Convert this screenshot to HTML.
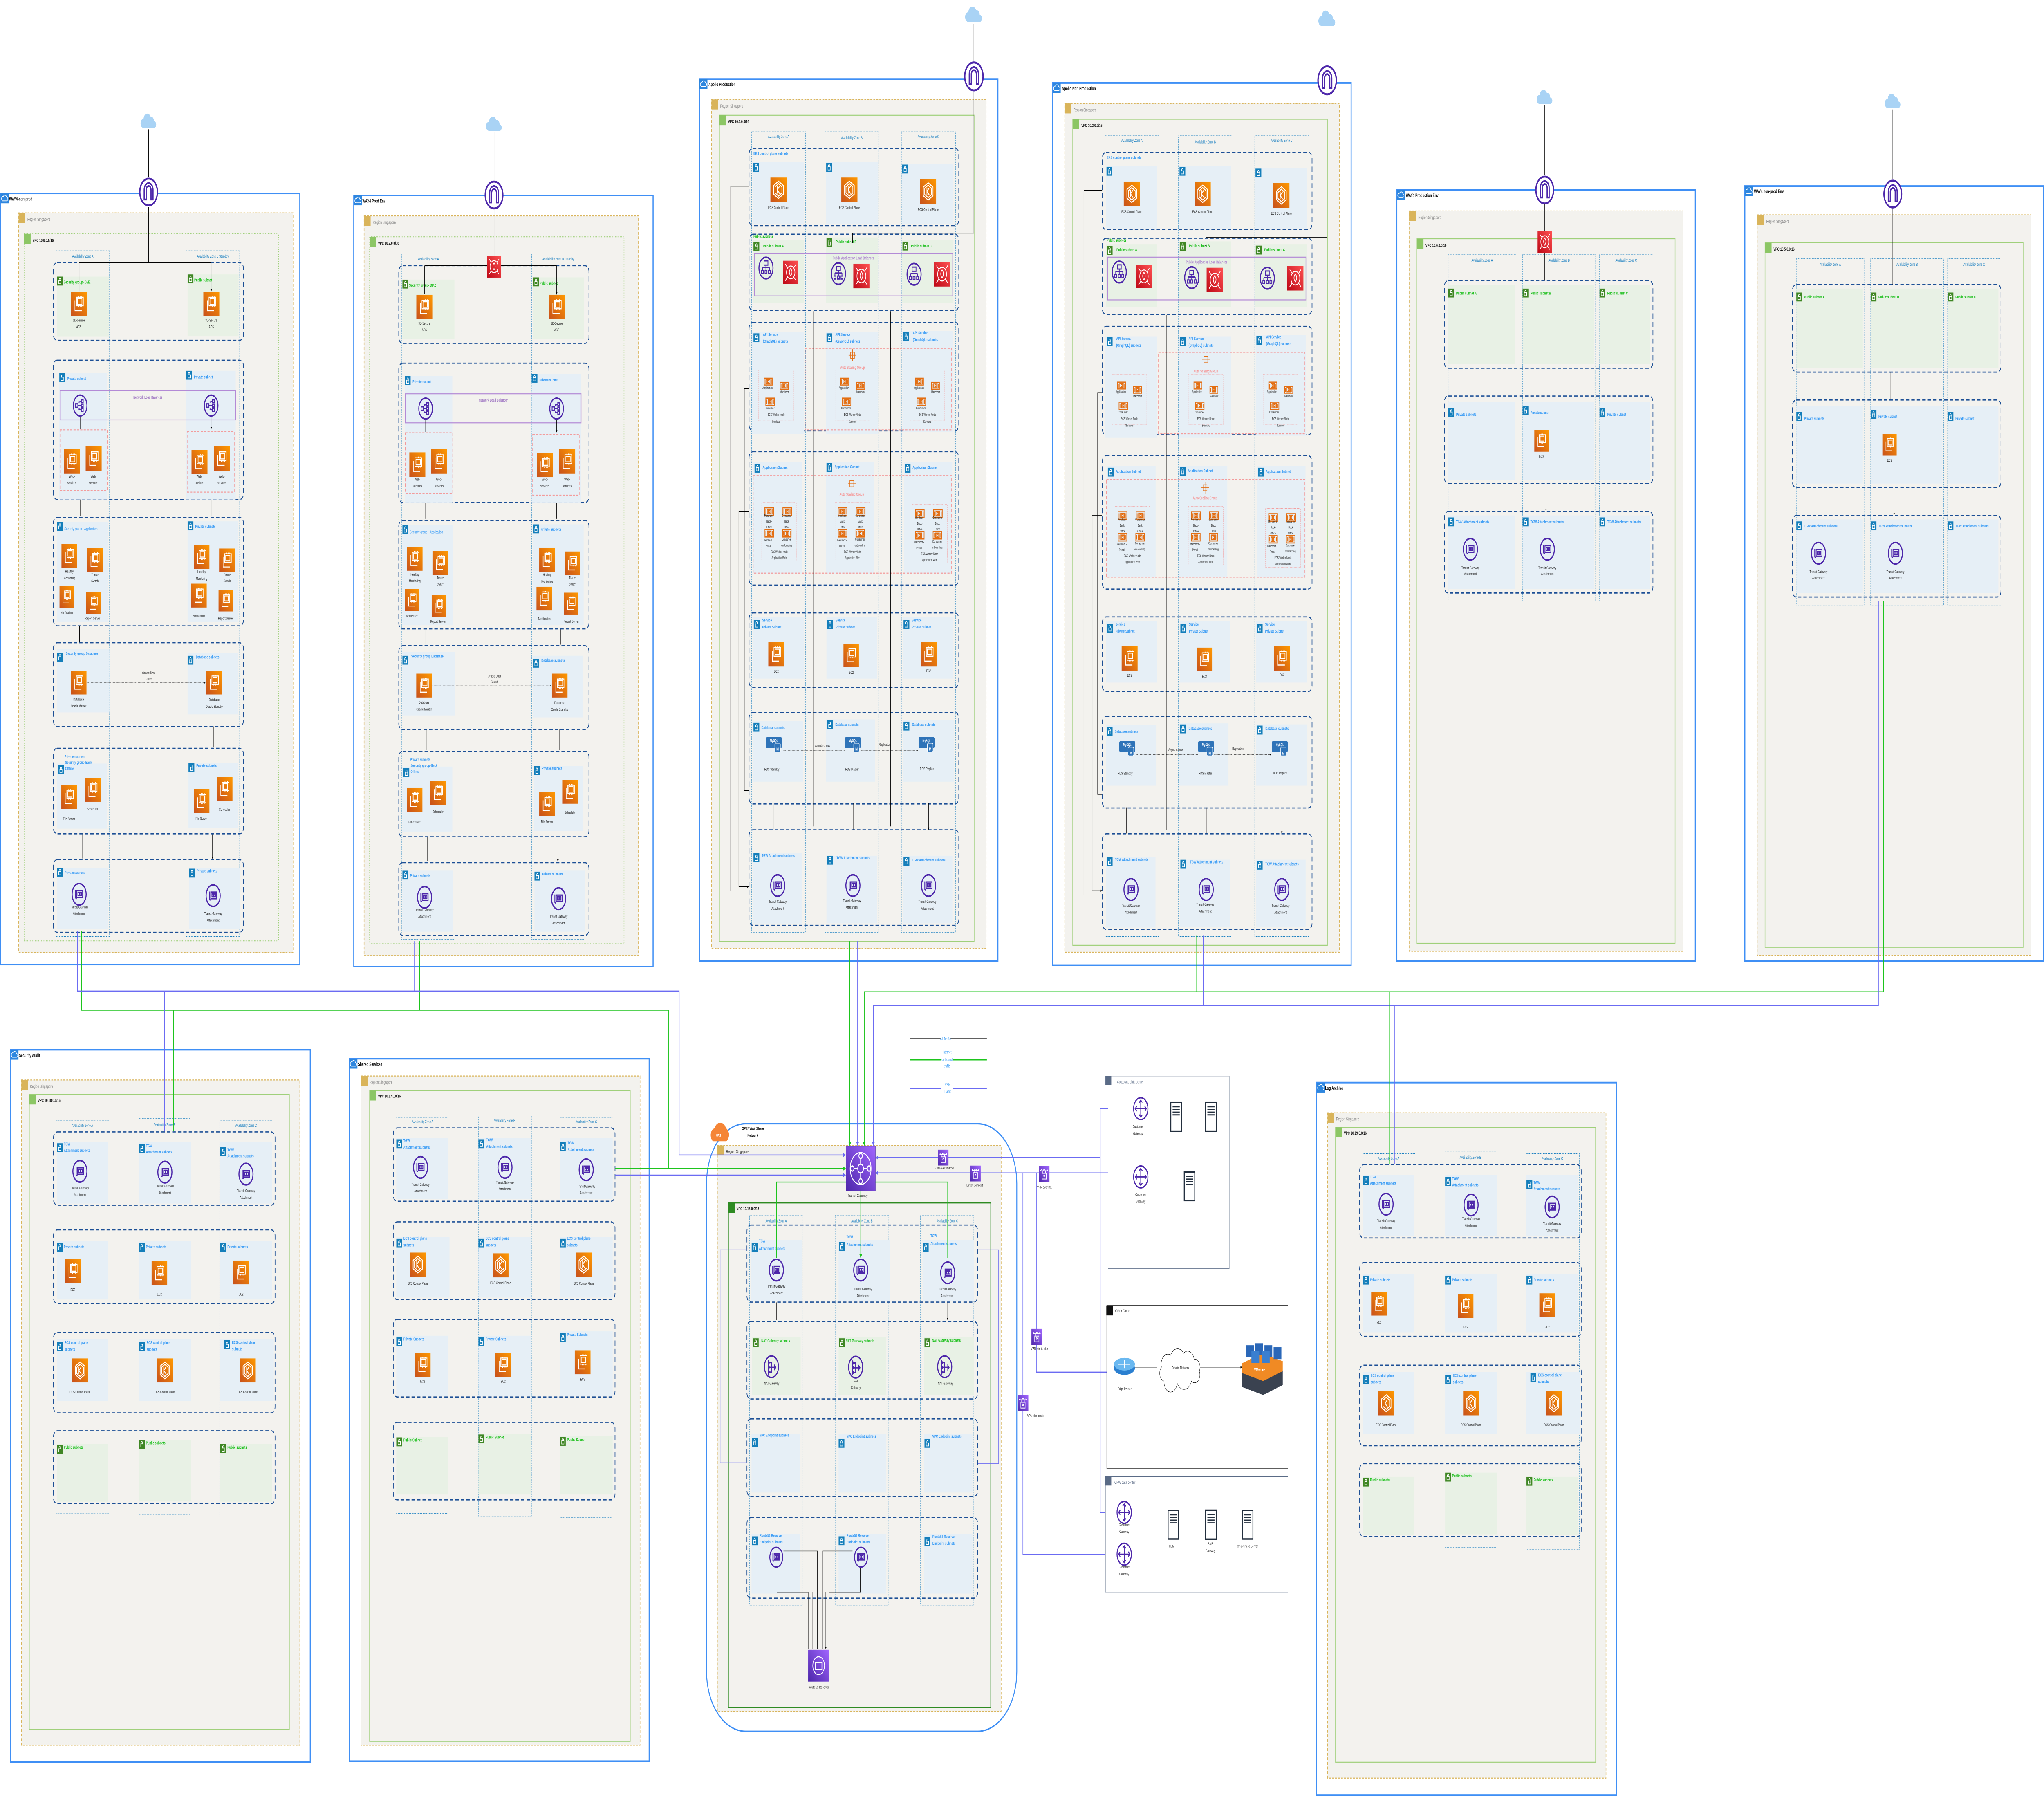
<!DOCTYPE html>
<html><head><meta charset="utf-8"><title>AWS Architecture</title>
<meta name="viewport" content="width=device-width,initial-scale=1">
<style>
html,body{margin:0;padding:0;background:#fff;width:100vw;height:100vh;overflow:hidden}
#main{display:block;position:absolute;left:0;top:0;width:100vw;height:100vh}
text{font-family:"Liberation Sans",Arial,sans-serif}
.acc{fill:#fff;stroke:#3f8ff5;stroke-width:.8}
.reg{fill:#f3f2ee;stroke:#d9b45a;stroke-width:.45;stroke-dasharray:1.4 .9}
.vpc{fill:none;stroke:#9fd07a;stroke-width:.45;stroke-dasharray:.5 .7}
.az{fill:none;stroke:#1a7fc0;stroke-width:.2;stroke-dasharray:.7 .5}
.g{fill:none;stroke:#1c4f95;stroke-width:.55;stroke-dasharray:2.6 1.6}
.sb{fill:#e6eff6}.sg{fill:#e8f1e5}
.pk{fill:none;stroke:#f39b9b;stroke-width:.45;stroke-dasharray:1.6 1}
.pd{fill:none;stroke:#f3a0a0;stroke-width:.2;stroke-dasharray:.6 .4}
.h{font-size:2.4px;font-weight:bold;fill:#111}
.rl{font-size:2.2px;fill:#8a8a8a}
.vl{font-size:2.2px;font-weight:bold;fill:#111}
.al{font-size:2px;fill:#1a7fc0;text-anchor:middle}
.lb{font-size:2.1px;font-weight:bold;fill:#3a9cf5}
.lg{font-size:2.1px;font-weight:bold;fill:#20c020}
.il{font-size:1.9px;fill:#222;text-anchor:middle}
.sm{font-size:1.6px;fill:#222;text-anchor:middle}
.k{stroke:#000;stroke-width:.3;fill:none}
.gr{stroke:#1dc41d;stroke-width:.5;fill:none}
.pu{stroke:#6b6bf2;stroke-width:.5;fill:none}
.pt{stroke:#6b6bf2;stroke-width:.25;fill:none}
</style></head>
<body>
<svg id="main" xmlns="http://www.w3.org/2000/svg" xmlns:xlink="http://www.w3.org/1999/xlink" width="100%" height="100%" viewBox="0 0 1568 903" preserveAspectRatio="none">
<defs>
<marker id="ar" viewBox="0 0 6 6" refX="5" refY="3" markerWidth="4" markerHeight="4" orient="auto"><path d="M0 0L6 3L0 6z" fill="#000"/></marker>
<marker id="ap" viewBox="0 0 6 6" refX="5" refY="3" markerWidth="4" markerHeight="4" orient="auto"><path d="M0 0L6 3L0 6z" fill="#6b6bf2"/></marker>
<marker id="ag" viewBox="0 0 6 6" refX="5" refY="3" markerWidth="4" markerHeight="4" orient="auto"><path d="M0 0L6 3L0 6z" fill="#1dc41d"/></marker>
<linearGradient id="og" x1="0" y1="1" x2="1" y2="0"><stop offset="0" stop-color="#c8511b"/><stop offset="1" stop-color="#ff9900"/></linearGradient>
<linearGradient id="pg" x1="0" y1="1" x2="1" y2="0"><stop offset="0" stop-color="#4d27aa"/><stop offset="1" stop-color="#a166ff"/></linearGradient>
<linearGradient id="rg" x1="0" y1="1" x2="1" y2="0"><stop offset="0" stop-color="#bd0816"/><stop offset="1" stop-color="#ff5252"/></linearGradient>
<symbol id="ec2" viewBox="0 0 40 40"><rect width="40" height="40" fill="url(#og)"/><g fill="none" stroke="#fff" stroke-width="1.6"><rect x="14" y="9" width="17" height="14"/><path d="M10 14v17h17"/><rect x="16.5" y="11.5" width="11" height="9"/><path d="M19 9V7M23 9V7M27 9V7M19 23v2M23 23v2M27 23v2"/></g></symbol>
<symbol id="eks" viewBox="0 0 40 40"><rect width="40" height="40" fill="url(#og)"/><g fill="none" stroke="#fff" stroke-width="1.8"><path d="M20 6l12 7v14l-12 7-12-7V13z"/><path d="M20 10l8.5 5v10L20 30l-8.5-5V15z"/><path d="M17 14v12M17 20l6-6M17 20l6 6"/></g></symbol>
<symbol id="tga" viewBox="0 0 40 40"><circle cx="20" cy="20" r="18" fill="none" stroke="#4d27aa" stroke-width="2.6"/><g fill="none" stroke="#4d27aa" stroke-width="2.2"><rect x="14" y="14" width="15" height="11"/><rect x="17" y="17" width="4" height="5"/><rect x="22" y="17" width="4" height="5"/><path d="M10.5 13v14M11 27h3"/></g></symbol>
<symbol id="elb" viewBox="0 0 40 40"><circle cx="20" cy="20" r="18" fill="none" stroke="#4d27aa" stroke-width="2.6"/><g fill="none" stroke="#4d27aa" stroke-width="2.2"><rect x="8" y="17" width="6" height="6"/><path d="M14 20h8M16 14l6-1M16 26l6 1"/><rect x="23" y="10" width="5" height="5"/><rect x="23" y="17.5" width="5" height="5"/><rect x="23" y="25" width="5" height="5"/></g></symbol>
<symbol id="alb" viewBox="0 0 40 40"><circle cx="20" cy="20" r="18" fill="none" stroke="#4d27aa" stroke-width="2.6"/><g fill="none" stroke="#4d27aa" stroke-width="2"><rect x="15" y="8" width="10" height="7"/><path d="M20 15v4M11 19h18M11 19v5M20 19v5M29 19v5"/><rect x="8.5" y="24" width="5" height="5"/><rect x="17.5" y="24" width="5" height="5"/><rect x="26.5" y="24" width="5" height="5"/></g></symbol>
<symbol id="nat" viewBox="0 0 40 40"><circle cx="20" cy="20" r="18" fill="none" stroke="#4d27aa" stroke-width="2.6"/><g fill="none" stroke="#4d27aa" stroke-width="2.2"><path d="M12 10l3 3-3 3zM12 18l3 3-3 3zM12 26l3 3-3 3z"/><path d="M15 13h5v16h-5M15 21h13M28 18l3 3-3 3z"/></g></symbol>
<symbol id="waf" viewBox="0 0 40 40"><rect width="40" height="40" fill="url(#rg)"/><g fill="none" stroke="#fff" stroke-width="1.6"><circle cx="20" cy="20" r="11"/><path d="M20 13c-5 5-4 9 0 13 4-4 5-8 0-13zM6 6l6 6M34 6l-6 6M6 34l6-6M34 34l-6-6"/></g></symbol>
<symbol id="ecs" viewBox="0 0 20 12"><g fill="none" stroke="#e36e12" stroke-width="1.5"><rect x="1" y="1" width="18" height="10"/><rect x="6" y="3" width="8" height="6"/><path d="M3 3v6M17 3v6M8.5 4.5h3v3h-3z"/></g></symbol>
<symbol id="db" viewBox="0 0 40 26"><rect width="40" height="18" rx="3" fill="#2e73b8"/><text x="20" y="8" font-size="6" font-weight="bold" fill="#fff" text-anchor="middle">MySQL</text><rect x="22" y="10" width="14" height="14" rx="2" fill="#2e73b8" stroke="#fff" stroke-width="1"/><text x="29" y="22" font-size="7" font-weight="bold" fill="#fff" text-anchor="middle">M</text></symbol>
<symbol id="cg" viewBox="0 0 40 40"><circle cx="20" cy="20" r="18" fill="#fff" stroke="#4d27aa" stroke-width="2.4"/><g fill="none" stroke="#4d27aa" stroke-width="2"><path d="M20 6v28M6 20h28M16 10l4-4 4 4M16 30l4 4 4-4M10 16l-4 4 4 4M30 16l4 4-4 4"/></g></symbol>
<symbol id="srv" viewBox="0 0 20 34"><rect x="1" y="1" width="18" height="32" fill="#fff" stroke="#232f3e" stroke-width="1.6"/><path d="M4 6h12M4 9h12M4 12h12M4 15h12" stroke="#232f3e" stroke-width="1.3"/></symbol>
<symbol id="vpn" viewBox="0 0 20 20"><rect width="20" height="20" fill="url(#pg)"/><g fill="none" stroke="#fff" stroke-width="1"><rect x="6" y="9" width="8" height="7"/><path d="M7.5 9V7a2.5 2.5 0 0 1 5 0v2M3 6h14M3 6l2-2M17 6l-2-2"/><circle cx="10" cy="12" r="1"/></g></symbol>
<symbol id="lkb" viewBox="0 0 10 10"><rect width="10" height="10" fill="#147eba"/><g fill="none" stroke="#fff" stroke-width=".8"><rect x="3" y="4.5" width="4" height="3.5"/><path d="M3.8 4.5V3.2a1.2 1.2 0 0 1 2.4 0v1.3"/></g></symbol>
<symbol id="lkg" viewBox="0 0 10 10"><rect width="10" height="10" fill="#3f8624"/><g fill="none" stroke="#fff" stroke-width=".8"><rect x="3" y="4.5" width="4" height="3.5"/><path d="M3.8 4.5V3.2a1.2 1.2 0 0 1 2.4 0v1.3"/></g></symbol>
<symbol id="igw" viewBox="0 0 40 40"><circle cx="20" cy="20" r="18" fill="#fff" stroke="#4d27aa" stroke-width="2.6"/><g fill="none" stroke="#4d27aa" stroke-width="2.4"><path d="M11 30V17a9 9 0 0 1 18 0v13h-4V17a5 5 0 0 0-10 0v13z"/></g></symbol>
<symbol id="cld" viewBox="0 0 40 24"><path d="M8 22a7 7 0 0 1 0-14 9 9 0 0 1 17-3 7 7 0 0 1 8 7 5 5 0 0 1 0 10z" fill="#a9d3f5"/></symbol>
<symbol id="acci" viewBox="0 0 10 8"><rect width="10" height="8" fill="#2e86de"/><path d="M2.5 6h5a1.5 1.5 0 0 0 0-3 2.2 2.2 0 0 0-4-.5A1.7 1.7 0 0 0 2.5 6z" fill="none" stroke="#fff" stroke-width=".6"/></symbol>

<g id="metro">
<rect class="reg" x="14.3" y="107" width="210.5" height="371.7"/>
<rect x="14.3" y="107" width="5" height="5" fill="#d9b45a"/>
<text class="rl" x="21" y="111">Region Singapore</text>
<rect class="vpc" x="18.5" y="117.5" width="195.2" height="355.3"/>
<rect x="18.5" y="117.5" width="5" height="5" fill="#8cc665"/>
<rect class="az" x="43" y="126" width="41" height="344.6"/>
<rect class="az" x="142.8" y="126" width="41" height="344.6"/>
<text class="al" x="63.5" y="129.4">Availability Zone A</text>
<text class="al" x="163.3" y="129.4">Availability Zone B Standby</text>
<rect class="g" x="40.9" y="132" width="145.9" height="39" rx="3"/>
<rect class="sg" x="43.7" y="139" width="39.9" height="30"/><use href="#lkg" x="43.7" y="139" width="4.5" height="4.5"/><text class="lg" x="48.8" y="142.5">Security group- DMZ</text>
<rect class="sg" x="143.9" y="137.9" width="39.1" height="31"/><use href="#lkg" x="143.9" y="137.9" width="4.5" height="4.5"/><text class="lg" x="149" y="141.5">Public subnet</text>
<use href="#ec2" x="54.4" y="146.6" width="12.3" height="12.3"/><text class="il" x="60.5" y="161.6">3D-Secure</text><text class="il" x="60.5" y="164.9">ACS</text>
<use href="#ec2" x="156" y="146.6" width="12.3" height="12.3"/><text class="il" x="162.1" y="161.6">3D-Secure</text><text class="il" x="162.1" y="164.9">ACS</text>
<rect class="g" x="40.9" y="181" width="145.9" height="70" rx="3"/>
<rect class="sb" x="45.5" y="187.5" width="36.5" height="63.5"/><use href="#lkb" x="45.5" y="187.5" width="4.5" height="4.5"/><text class="lb" x="51.5" y="191">Private subnet</text>
<rect class="sb" x="142.8" y="186.3" width="38" height="64.7"/><use href="#lkb" x="142.8" y="186.3" width="4.5" height="4.5"/><text class="lb" x="148.8" y="190.2">Private subnet</text>
<rect x="46" y="196.4" width="134.8" height="14.6" fill="none" stroke="#b38ad6" stroke-width=".45"/>
<text x="113.4" y="200.3" font-size="2px" font-weight="bold" fill="#a37cc4" text-anchor="middle">Network Load Balancer</text>
<use href="#elb" x="55.7" y="198" width="11.6" height="11.6"/><use href="#elb" x="156.2" y="198" width="11.6" height="11.6"/>
<path class="k" d="M61.5 209.6V215.6M162 209.6V215.6" marker-end="url(#ar)"/>
<rect class="pk" x="46" y="216" width="36.3" height="30.5"/><rect class="pk" x="143.6" y="216.8" width="36.1" height="30.5"/>
<use href="#ec2" x="49" y="225.8" width="12.3" height="12.3"/><use href="#ec2" x="65.7" y="224.3" width="12.3" height="12.3"/>
<use href="#ec2" x="146.9" y="226" width="12.3" height="12.3"/><use href="#ec2" x="164" y="224.3" width="12.3" height="12.3"/>
<text class="il" x="55.2" y="240">Web-</text><text class="il" x="55.2" y="243.3">services</text>
<text class="il" x="71.8" y="240">Web-</text><text class="il" x="71.8" y="243.3">services</text>
<text class="il" x="153" y="240">Web-</text><text class="il" x="153" y="243.3">services</text>
<text class="il" x="170.1" y="240">Web-</text><text class="il" x="170.1" y="243.3">services</text>
<path class="k" d="M61.5 251V259.2M162 251V259.2M61 314.5V322.4M165 314.5V322.4M62 365V375.4M164 365V375.4M63 419V431.4M163 419V431.4" marker-end="url(#ar)"/>
<rect class="g" x="40.9" y="260" width="145.9" height="54.5" rx="3"/>
<rect class="sb" x="43.7" y="262.3" width="38.9" height="50.4"/><use href="#lkb" x="43.7" y="262.3" width="4.5" height="4.5"/><text x="49.3" y="266.5" font-size="2.1px" fill="#3a9cf5">Security group - Application</text>
<rect class="sb" x="143.9" y="262" width="38.8" height="50.7"/><use href="#lkb" x="143.9" y="262" width="4.5" height="4.5"/><text class="lb" x="149.8" y="265.2">Private subnets</text>
<use href="#ec2" x="47" y="273.3" width="12.3" height="12"/><use href="#ec2" x="66.6" y="275.4" width="12.3" height="12"/>
<use href="#ec2" x="45" y="294.5" width="12.3" height="11"/><use href="#ec2" x="65.5" y="297.6" width="12.3" height="11"/>
<text class="il" x="53.2" y="287.8">Healthy</text><text class="il" x="53.2" y="291.1">Monitoring</text>
<text class="il" x="72.8" y="289.3">Trans-</text><text class="il" x="72.8" y="292.6">Switch</text>
<text class="il" x="51.2" y="308.6">Notification</text><text class="il" x="71" y="311.4">Report Server</text>
<use href="#ec2" x="148.5" y="273.8" width="12.3" height="12"/><use href="#ec2" x="168" y="275.6" width="12.3" height="12"/>
<use href="#ec2" x="146.4" y="293.3" width="12.3" height="12"/><use href="#ec2" x="167" y="296.3" width="12.3" height="11"/>
<text class="il" x="154.7" y="288">Healthy</text><text class="il" x="154.7" y="291.3">Monitoring</text>
<text class="il" x="174.2" y="289.3">Trans-</text><text class="il" x="174.2" y="292.6">Switch</text>
<text class="il" x="152.6" y="310.1">Notification</text><text class="il" x="173.2" y="311.4">Report Server</text>
<rect class="g" x="40.9" y="323" width="145.9" height="42" rx="3"/>
<rect class="sb" x="43.7" y="326.2" width="40.3" height="31.8"/><use href="#lkb" x="43.7" y="328" width="4.5" height="4.5"/><text class="lb" x="50.5" y="329">Security group Database</text>
<rect class="sb" x="143.9" y="328" width="38.5" height="31"/><use href="#lkb" x="143.9" y="329.5" width="4.5" height="4.5"/><text class="lb" x="150.3" y="330.9">Database subnets</text>
<use href="#ec2" x="54.2" y="337" width="12.3" height="12"/><use href="#ec2" x="158.2" y="337" width="12.3" height="12"/>
<text class="il" x="60.3" y="352.1">Database</text><text class="il" x="60.3" y="355.5">Oracle Master</text>
<text class="il" x="164.3" y="352.3">Database</text><text class="il" x="164.3" y="355.7">Oracle Standby</text>
<path d="M66.7 343.1H157.5" stroke="#444" stroke-width=".2" stroke-dasharray=".6 .4" fill="none" marker-end="url(#ar)"/>
<text class="il" x="114.2" y="338.8">Oracle Data</text><text class="il" x="114.2" y="341.8">Guard</text>
<rect class="g" x="40.9" y="376" width="145.9" height="43" rx="3"/>
<rect class="sb" x="43.7" y="383.7" width="38.3" height="32.7"/><use href="#lkb" x="44.5" y="384.5" width="4.5" height="4.5"/>
<text class="lb" x="49.6" y="380.9">Private subnets</text><text class="lb" x="50" y="383.8">Security group-Back</text><text class="lb" x="50" y="386.9">Offfice</text>
<rect class="sb" x="144.6" y="383.5" width="37.7" height="32.5"/><use href="#lkb" x="144.6" y="383.5" width="4.5" height="4.5"/><text class="lb" x="150.6" y="385.3">Private subnets</text>
<use href="#ec2" x="46.9" y="394.4" width="12.3" height="12"/><use href="#ec2" x="65" y="390.9" width="12.3" height="12"/>
<use href="#ec2" x="148.5" y="396.5" width="12.3" height="12"/><use href="#ec2" x="166.2" y="390.4" width="12.3" height="12"/>
<text class="il" x="53" y="412.2">File-Server</text><text class="il" x="71" y="407.1">Scheduler</text>
<text class="il" x="154.6" y="412">File Server</text><text class="il" x="172.3" y="407.4">Scheduler</text>
<rect class="g" x="40.9" y="432" width="145.9" height="36.5" rx="3"/>
<rect class="sb" x="43.7" y="436" width="38.9" height="30.7"/><use href="#lkb" x="43.7" y="436" width="4.5" height="4.5"/><text class="lb" x="49.6" y="439.2">Private subnets</text>
<rect class="sb" x="145" y="436" width="38.8" height="30.7"/><use href="#lkb" x="145" y="436.5" width="4.5" height="4.5"/><text class="lb" x="151" y="438.4">Private subnets</text>
<use href="#tga" x="54.7" y="443.4" width="12" height="12"/><use href="#tga" x="157.5" y="444.1" width="12" height="12"/>
<text class="il" x="60.7" y="456.4">Transit Gateway</text><text class="il" x="60.7" y="459.7">Attachment</text>
<text class="il" x="163.5" y="459.7">Transit Gateway</text><text class="il" x="163.5" y="463">Attachment</text>
<use href="#cld" x="107.5" y="57" width="13" height="8"/>
<path class="k" d="M114 65V89"/>
<path class="k" d="M114 104V132M60.7 132H162"/>
<path class="k" d="M60.7 132V146.4M162 132V146.4" marker-end="url(#ar)"/>
<use href="#igw" x="106.5" y="89" width="15" height="15"/>
</g>

<g id="apollo">
<rect class="reg" x="545.8" y="50" width="210.7" height="426.5"/>
<rect x="545.8" y="50" width="5" height="5" fill="#d9b45a"/>
<text class="rl" x="552.5" y="54">Region Singapore</text>
<rect x="551.9" y="57.9" width="195.4" height="415.1" fill="none" stroke="#9fd07a" stroke-width=".45"/>
<rect x="551.9" y="57.9" width="5" height="5" fill="#8cc665"/>
<rect class="az" x="576.6" y="66.2" width="41.4" height="402.4"/>
<rect class="az" x="633" y="66.2" width="41" height="402.4"/>
<rect class="az" x="691.5" y="66.2" width="41.5" height="402.4"/>
<text class="al" x="597.3" y="69.3">Availability Zone A</text><text class="al" x="653.5" y="70">Availability Zone B</text><text class="al" x="712.2" y="69.3">Availability Zone C</text>
<rect class="g" x="574.6" y="74.5" width="160.9" height="38.9" rx="3"/>
<text class="lb" x="578" y="77.8">EKS control plane subnets</text>
<rect class="sb" x="577.5" y="81.5" width="39.2" height="31.3"/><use href="#lkb" x="577.8" y="81.8" width="4.5" height="4.5"/>
<rect class="sb" x="633.5" y="81.5" width="40" height="31.3"/><use href="#lkb" x="633.8" y="81.8" width="4.5" height="4.5"/>
<rect class="sb" x="691.8" y="82.4" width="39.6" height="30.4"/><use href="#lkb" x="692.1" y="82.7" width="4.5" height="4.5"/>
<use href="#eks" x="591" y="89.2" width="12.4" height="12.4"/><use href="#eks" x="645.4" y="89.2" width="12.4" height="12.4"/><use href="#eks" x="705.8" y="90" width="12.4" height="12.4"/>
<text class="il" x="597.2" y="105">ECS Control Plane</text><text class="il" x="651.6" y="105">ECS Control Plane</text><text class="il" x="712" y="105.9">ECS Control Plane</text>
<rect class="g" x="574.6" y="117.7" width="160.9" height="38.3" rx="3"/>
<rect class="sg" x="577.5" y="120.7" width="39.2" height="31.6"/><use href="#lkg" x="578" y="121.6" width="4.5" height="4.5"/>
<rect class="sg" x="633.5" y="119.3" width="40" height="33"/><use href="#lkg" x="634" y="119.6" width="4.5" height="4.5"/>
<rect class="sg" x="691.8" y="120.7" width="39.6" height="31.6"/><use href="#lkg" x="692.3" y="121.4" width="4.5" height="4.5"/>
<text class="lg" x="578" y="119.4">Public subnets</text>
<text class="lg" x="585.5" y="124.3">Public subnet A</text><text class="lg" x="641.2" y="122.2">Public subnet B</text><text class="lg" x="698.9" y="124.3">Public subnet C</text>
<rect x="578.7" y="127.2" width="152.1" height="21.5" fill="none" stroke="#b38ad6" stroke-width=".45"/>
<text x="654.6" y="130.4" font-size="2px" font-weight="bold" fill="#b08ad0" text-anchor="middle">Public Application Load Balancer</text>
<use href="#alb" x="581.6" y="128.7" width="12" height="12"/><use href="#alb" x="637.2" y="131.5" width="12" height="12"/><use href="#alb" x="695.2" y="131.8" width="12" height="12"/>
<use href="#waf" x="600.4" y="131" width="12.3" height="11.8"/><use href="#waf" x="654.6" y="132.5" width="12.4" height="12.4"/><use href="#waf" x="716.5" y="131.6" width="12.4" height="12.4"/>
<rect class="g" x="574.6" y="162" width="160.9" height="54.5" rx="3"/>
<rect class="sb" x="577" y="167" width="39.6" height="51"/><use href="#lkb" x="578" y="167.5" width="4.5" height="4.5"/>
<rect class="sb" x="633.5" y="167" width="40" height="51"/><use href="#lkb" x="634" y="167.5" width="4.5" height="4.5"/>
<rect class="sb" x="692.3" y="166.4" width="38.4" height="50.6"/><use href="#lkb" x="692.8" y="166.8" width="4.5" height="4.5"/>
<text class="lb" x="585.3" y="168.8">API Service</text><text class="lb" x="585.3" y="172.2">(GraphQL) subnets</text>
<text class="lb" x="640.8" y="168.8">API Service</text><text class="lb" x="640.8" y="172.2">(GraphQL) subnets</text>
<text class="lb" x="700.3" y="168">API Service</text><text class="lb" x="700.3" y="171.4">(GraphQL) subnets</text>
<rect class="pk" x="617.7" y="175" width="112.3" height="41"/>
<path d="M651 178.5h6M654 175.5v6" stroke="#e36e12" stroke-width=".35"/><rect x="652.5" y="177" width="3" height="3" fill="none" stroke="#e36e12" stroke-width=".35"/>
<text x="654" y="185.3" font-size="2px" font-weight="bold" fill="#f59a9a" text-anchor="middle">Auto Scaling Group</text>
<g id="apis">
<rect class="pd" x="582" y="186" width="26.7" height="25.5"/>
<use href="#ecs" x="585.5" y="189.7" width="7.7" height="4.1"/><use href="#ecs" x="597.7" y="191.8" width="7.8" height="4.1"/><use href="#ecs" x="586.8" y="199.7" width="7.9" height="4.4"/>
<text class="sm" x="588.8" y="195.5">Application</text><text class="sm" x="601.7" y="197.6">Merchant</text><text class="sm" x="590.4" y="205.7">Consumer</text>
<text class="sm" x="595.4" y="209">ECS Worker Node</text><text class="sm" x="595.4" y="212.4">Services</text>
</g>
<use href="#apis" transform="translate(58.6,0)"/><use href="#apis" transform="translate(116,0)"/>
<rect class="g" x="574.6" y="227" width="160.9" height="67" rx="3"/>
<rect class="sb" x="577.8" y="232.1" width="37.7" height="56.1"/><use href="#lkb" x="578.8" y="233" width="4.5" height="4.5"/>
<rect class="sb" x="633.5" y="232.1" width="37" height="56.1"/><use href="#lkb" x="634" y="232.6" width="4.5" height="4.5"/>
<rect class="sb" x="693.5" y="232.1" width="37" height="56.1"/><use href="#lkb" x="694" y="233" width="4.5" height="4.5"/>
<text class="lb" x="585" y="235.6">Application Subnet</text><text class="lb" x="640.2" y="235.3">Application Subnet</text><text class="lb" x="700" y="235.6">Application Subnet</text>
<rect class="pk" x="577.8" y="239" width="152.2" height="49"/>
<path d="M650.4 243.1h6M653.4 240.1v6" stroke="#e36e12" stroke-width=".35"/><rect x="651.9" y="241.6" width="3" height="3" fill="none" stroke="#e36e12" stroke-width=".35"/>
<text x="653.4" y="249" font-size="2px" font-weight="bold" fill="#f59a9a" text-anchor="middle">Auto Scaling Group</text>
<g id="apw">
<rect class="pd" x="584.3" y="252.5" width="26.9" height="29.5"/>
<use href="#ecs" x="585.8" y="254.8" width="8.6" height="4.5"/><use href="#ecs" x="600" y="254.8" width="7.9" height="4.5"/>
<use href="#ecs" x="586.2" y="265.8" width="7.8" height="4.4"/><use href="#ecs" x="599.6" y="265.8" width="8" height="4.4"/>
<text class="sm" x="590.1" y="259.7">Merchant -</text><text class="sm" x="590.1" y="262.6">Back-</text><text class="sm" x="590.1" y="265.5">Office</text>
<text class="sm" x="603.6" y="259.7">Consumer</text><text class="sm" x="603.6" y="262.6">Back</text><text class="sm" x="603.6" y="265.5">Office</text>
<text class="sm" x="589.5" y="272">Merchant -</text><text class="sm" x="589.5" y="274.9">Portal</text>
<text class="sm" x="603.4" y="271.6">Consumer</text><text class="sm" x="603.4" y="274.6">onBoarding</text>
<text class="sm" x="597.7" y="277.9">ECS Worker Node</text><text class="sm" x="597.7" y="280.9">Application Web</text>
</g>
<use href="#apw" transform="translate(56.3,0)"/><use href="#apw" transform="translate(115.5,1)"/>
<rect class="g" x="574.6" y="308" width="160.9" height="37.5" rx="3"/>
<rect class="sb" x="577.5" y="310" width="39.2" height="31"/><use href="#lkb" x="578.2" y="311.5" width="4.5" height="4.5"/>
<rect class="sb" x="634" y="310" width="38.7" height="31"/><use href="#lkb" x="634.5" y="311.5" width="4.5" height="4.5"/>
<rect class="sb" x="692.6" y="310" width="38.8" height="31"/><use href="#lkb" x="693.1" y="311.5" width="4.5" height="4.5"/>
<text class="lb" x="584.7" y="312.4">Service</text><text class="lb" x="584.7" y="315.8">Private Subnet</text>
<text class="lb" x="641.1" y="312.4">Service</text><text class="lb" x="641.1" y="315.8">Private Subnet</text>
<text class="lb" x="699.5" y="312.4">Service</text><text class="lb" x="699.5" y="315.8">Private Subnet</text>
<use href="#ec2" x="589.4" y="322.6" width="12.3" height="12.4"/><use href="#ec2" x="646.8" y="323.4" width="12.3" height="11.8"/><use href="#ec2" x="706.3" y="322.6" width="12.3" height="12.4"/>
<text class="il" x="595.5" y="338">EC2</text><text class="il" x="653" y="338.6">EC2</text><text class="il" x="712.4" y="337.8">EC2</text>
<rect class="g" x="574.6" y="358" width="160.9" height="46" rx="3"/>
<rect class="sb" x="577.5" y="362.4" width="38.7" height="30.4"/><use href="#lkb" x="578" y="363.2" width="4.5" height="4.5"/>
<rect class="sb" x="633.8" y="361.5" width="37.6" height="31.3"/><use href="#lkb" x="634.3" y="362" width="4.5" height="4.5"/>
<rect class="sb" x="692.6" y="362" width="39.3" height="30.8"/><use href="#lkb" x="693.1" y="362.6" width="4.5" height="4.5"/>
<text class="lb" x="584.1" y="366.3">Database subnets</text><text class="lb" x="640.8" y="364.8">Database subnets</text><text class="lb" x="699.7" y="364.8">Database subnets</text>
<use href="#db" x="587.6" y="370.4" width="12.3" height="8"/><use href="#db" x="648.1" y="370.4" width="12.3" height="8"/><use href="#db" x="704.6" y="370.4" width="12.4" height="8"/>
<text class="il" x="592.1" y="387.2">RDS Standby</text><text class="il" x="653.6" y="387.2">RDS Master</text><text class="il" x="711.1" y="387">RDS Replica</text>
<path d="M648 377.2H600.8M660.5 377.2H704" stroke="#444" stroke-width=".2" stroke-dasharray=".6 .4" fill="none" marker-end="url(#ar)"/>
<text x="631" y="375.3" font-size="1.8px" fill="#222" text-anchor="middle" font-family="Liberation Serif,serif">Asynchronous</text>
<text x="678.7" y="374.8" font-size="1.8px" fill="#222" text-anchor="middle" font-family="Liberation Serif,serif">Replication</text>
<rect class="g" x="574.6" y="417" width="160.9" height="48" rx="3"/>
<rect class="sb" x="577.5" y="428.8" width="37.9" height="35.3"/><use href="#lkb" x="578" y="428.8" width="4.5" height="4.5"/>
<rect class="sb" x="634" y="430" width="38.7" height="34"/><use href="#lkb" x="634.5" y="430" width="4.5" height="4.5"/>
<rect class="sb" x="692.6" y="430" width="38" height="34"/><use href="#lkb" x="693.1" y="430.5" width="4.5" height="4.5"/>
<text class="lb" x="584.3" y="430.6">TGW Attachment subnets</text><text class="lb" x="641.8" y="431.8">TGW Attachment subnets</text><text class="lb" x="699.7" y="432.9">TGW Attachment subnets</text>
<use href="#tga" x="590.6" y="439" width="12" height="12"/><use href="#tga" x="648.3" y="439" width="12" height="12"/><use href="#tga" x="706.3" y="439" width="12" height="12"/>
<text class="il" x="596.6" y="453.7">Transit Gateway</text><text class="il" x="596.6" y="457.1">Attachment</text>
<text class="il" x="653.6" y="453.1">Transit Gateway</text><text class="il" x="653.6" y="456.5">Attachment</text>
<text class="il" x="711.4" y="453.7">Transit Gateway</text><text class="il" x="711.4" y="457.1">Attachment</text>
<path class="k" d="M623.7 156.4V415.3M683.2 156.4V415.3M593.2 403.7V416.8M654.8 403.7V416.8M712.3 403.7V416.8" marker-end="url(#ar)" stroke-width=".35"/>
<path class="k" d="M574.5 93.6H560.5V447.7H574.3M574.3 195.3H571V397.2H574.3M574.3 256.9H566.8V445.6H574.3" marker-end="url(#ar)" stroke-width=".2"/>
<path class="k" d="M747.1 12V31M747.1 46V117.2H654" stroke-width=".25"/>
<path class="k" d="M654 117.2V122" marker-end="url(#ar)" stroke-width=".25"/>
<use href="#cld" x="740" y="3" width="14" height="9"/>
<use href="#igw" x="739.3" y="30.6" width="15.6" height="15.6"/>
</g>

<g id="mp">
<rect class="reg" x="1081" y="106" width="210" height="372"/>
<rect x="1081" y="106" width="5" height="5" fill="#d9b45a"/>
<text class="rl" x="1088" y="110">Region Singapore</text>
<rect x="1087" y="120" width="198" height="354" fill="none" stroke="#9fd07a" stroke-width=".45"/>
<rect x="1087" y="120" width="5" height="5" fill="#8cc665"/>
<rect class="az" x="1111" y="128" width="52" height="174"/><rect class="az" x="1168" y="128" width="56" height="174"/><rect class="az" x="1227" y="128" width="41" height="174"/>
<text class="al" x="1137" y="131.5">Availability Zone A</text><text class="al" x="1196" y="131.5">Availability Zone B</text><text class="al" x="1247.5" y="131.5">Availability Zone C</text>
<rect class="g" x="1108" y="141" width="160" height="44" rx="3"/>
<rect class="sg" x="1111" y="143" width="51" height="40"/><use href="#lkg" x="1111" y="145" width="4.5" height="4.5"/><text class="lg" x="1117" y="148">Public subnet A</text>
<rect class="sg" x="1168" y="143" width="55" height="40"/><use href="#lkg" x="1168" y="145" width="4.5" height="4.5"/><text class="lg" x="1174" y="148">Public subnet B</text>
<rect class="sg" x="1227" y="143" width="39" height="40"/><use href="#lkg" x="1227" y="145" width="4.5" height="4.5"/><text class="lg" x="1233" y="148">Public subnet C</text>
<rect class="g" x="1108" y="199" width="160" height="44" rx="3"/>
<rect class="sb" x="1111" y="202" width="51" height="39"/><use href="#lkb" x="1111" y="205" width="4.5" height="4.5"/><text class="lb" x="1117" y="209">Private subnets</text>
<rect class="sb" x="1168" y="202" width="55" height="39"/><use href="#lkb" x="1168" y="204" width="4.5" height="4.5"/><text class="lb" x="1174" y="208">Private subnet</text>
<rect class="sb" x="1227" y="202" width="39" height="39"/><use href="#lkb" x="1227" y="205" width="4.5" height="4.5"/><text class="lb" x="1233" y="209">Private subnet</text>
<use href="#ec2" x="1177" y="216" width="11" height="11"/><text class="il" x="1182.5" y="230">EC2</text>
<rect class="g" x="1108" y="257" width="160" height="41" rx="3"/>
<rect class="sb" x="1111" y="259" width="51" height="37"/><use href="#lkb" x="1111" y="260" width="4.5" height="4.5"/><text class="lb" x="1117" y="263">TGW Attachment subnets</text>
<rect class="sb" x="1168" y="259" width="55" height="37"/><use href="#lkb" x="1168" y="260" width="4.5" height="4.5"/><text class="lb" x="1174" y="263">TGW Attachment subnets</text>
<rect class="sb" x="1227" y="259" width="39" height="37"/><use href="#lkb" x="1227" y="260" width="4.5" height="4.5"/><text class="lb" x="1233" y="263">TGW Attachment subnets</text>
<use href="#tga" x="1122" y="270" width="12" height="12"/><use href="#tga" x="1181" y="270" width="12" height="12"/>
<text class="il" x="1128" y="286">Transit Gateway</text><text class="il" x="1128" y="289">Attachment</text>
<text class="il" x="1187" y="286">Transit Gateway</text><text class="il" x="1187" y="289">Attachment</text>
<path class="k" d="M1183 185V198.6M1186 243V256.6" marker-end="url(#ar)"/>
<use href="#cld" x="1178.5" y="45" width="13" height="8"/>
<path class="k" d="M1185 53V88M1185 102V141"/>
<use href="#igw" x="1177.5" y="88" width="15" height="15"/>
</g>

<g id="sa">
<rect class="reg" x="16.4" y="542.7" width="213.6" height="334.3"/>
<rect x="16.4" y="542.7" width="5" height="5" fill="#d9b45a"/>
<text class="rl" x="23" y="546.6">Region Singapore</text>
<rect x="22.5" y="550" width="199.5" height="319" fill="none" stroke="#9fd07a" stroke-width=".45"/>
<rect x="22.5" y="550" width="5" height="5" fill="#8cc665"/>
<path class="az" d="M43.3 563.2H84M43.3 760.4H84M106.6 562H146.7M106.6 761H146.7"/>
<rect class="az" x="168.5" y="563.2" width="41.1" height="199"/>
<text class="al" x="63.2" y="566.3">Availability Zone A</text><text class="al" x="126" y="565.8">Availability Zone B</text><text class="al" x="188.8" y="566.3">Availability Zone C</text>
<rect class="g" x="41" y="568.8" width="170" height="36.8" rx="3"/>
<rect class="sb" x="43.6" y="574" width="38.9" height="30.8"/><use href="#lkb" x="43.6" y="574.5" width="4.5" height="4.5"/><text class="lb" x="49" y="575.6">TGW</text><text class="lb" x="49" y="578.8">Attachment subnets</text>
<rect class="sb" x="106.6" y="574" width="40.1" height="30.8"/><use href="#lkb" x="106.6" y="575" width="4.5" height="4.5"/><text class="lb" x="112" y="576.5">TGW</text><text class="lb" x="112" y="579.6">Attachment subnets</text>
<rect class="sb" x="169" y="574" width="39.7" height="30.8"/><use href="#lkb" x="169" y="576.5" width="4.5" height="4.5"/><text class="lb" x="174.5" y="578.5">TGW</text><text class="lb" x="174.5" y="581.6">Attachment subnets</text>
<use href="#tga" x="55.3" y="582.6" width="12" height="12"/><use href="#tga" x="120.5" y="583" width="12" height="12"/><use href="#tga" x="182.7" y="584" width="12" height="12"/>
<text class="il" x="61.3" y="597.6">Transit Gateway</text><text class="il" x="61.3" y="601">Attachment</text>
<text class="il" x="126.5" y="596.6">Transit Gateway</text><text class="il" x="126.5" y="600">Attachment</text>
<text class="il" x="188.7" y="599">Transit Gateway</text><text class="il" x="188.7" y="602.4">Attachment</text>
<rect class="g" x="41" y="618" width="170" height="37" rx="3"/>
<rect class="sb" x="43.6" y="623.6" width="38.9" height="29.4"/><use href="#lkb" x="43.6" y="624.5" width="4.5" height="4.5"/><text class="lb" x="49" y="627.3">Private subnets</text>
<rect class="sb" x="106.6" y="623.6" width="40.1" height="29.4"/><use href="#lkb" x="106.6" y="624.5" width="4.5" height="4.5"/><text class="lb" x="112" y="627.3">Private subnets</text>
<rect class="sb" x="169" y="623.6" width="39.7" height="29.4"/><use href="#lkb" x="169" y="624.5" width="4.5" height="4.5"/><text class="lb" x="174.5" y="627.3">Private subnets</text>
<use href="#ec2" x="49.8" y="632.6" width="12.2" height="12"/><use href="#ec2" x="116.2" y="633.8" width="12.2" height="12"/><use href="#ec2" x="178.8" y="633.4" width="12.2" height="12"/>
<text class="il" x="55.9" y="648.7">EC2</text><text class="il" x="122.3" y="651">EC2</text><text class="il" x="184.9" y="651">EC2</text>
<rect class="g" x="41" y="669.5" width="170" height="40.5" rx="3"/>
<rect class="sb" x="43.6" y="673" width="38.9" height="31"/><use href="#lkb" x="43.6" y="674.5" width="4.5" height="4.5"/><text class="lb" x="49.5" y="675.4">ECS control plane</text><text class="lb" x="49.5" y="678.7">subnets</text>
<rect class="sb" x="106.6" y="673" width="40.1" height="31"/><use href="#lkb" x="106.6" y="674.5" width="4.5" height="4.5"/><text class="lb" x="112.5" y="675.4">ECS control plane</text><text class="lb" x="112.5" y="678.7">subnets</text>
<rect class="sb" x="169" y="673" width="41" height="31"/><use href="#lkb" x="172" y="673.5" width="4.5" height="4.5"/><text class="lb" x="178" y="675.2">ECS control plane</text><text class="lb" x="178" y="678.5">subnets</text>
<use href="#eks" x="55.2" y="682.6" width="12.5" height="12.1"/><use href="#eks" x="120.4" y="682.6" width="12.2" height="12.1"/><use href="#eks" x="184" y="682.6" width="12.2" height="12.1"/>
<text class="il" x="61.4" y="700.1">ECS Control Plane</text><text class="il" x="126.5" y="700.1">ECS Control Plane</text><text class="il" x="190.1" y="700.1">ECS Control Plane</text>
<rect class="g" x="41" y="719" width="170" height="36.6" rx="3"/>
<rect class="sg" x="43.6" y="725.6" width="38.9" height="29"/><use href="#lkg" x="43.6" y="726" width="4.5" height="4.5"/><text class="lg" x="49" y="727.9">Public subnets</text>
<rect class="sg" x="106.6" y="723.5" width="40.1" height="31"/><use href="#lkg" x="106.6" y="723.5" width="4.5" height="4.5"/><text class="lg" x="112" y="725.8">Public subnets</text>
<rect class="sg" x="169" y="725.6" width="39.7" height="29"/><use href="#lkg" x="169" y="725.6" width="4.5" height="4.5"/><text class="lg" x="174.5" y="727.9">Public subnets</text>
</g>
</defs>

<rect x="0" y="0" width="1568" height="903" fill="#fff"/>

<rect class="acc" x="0.4" y="97.2" width="229.6" height="387.5"/>
<use href="#acci" x="0.4" y="97.2" width="6.2" height="5"/>
<text class="h" x="7" y="100.8">WAY4-non-prod</text>
<use href="#metro"/>
<text class="vl" x="25" y="121.5">VPC 10.8.0.0/16</text>

<rect class="acc" x="271.4" y="98.2" width="229.6" height="387.5"/>
<use href="#acci" x="271.4" y="98.2" width="6.2" height="5"/>
<text class="h" x="278" y="101.8">WAY4 Prod Env</text>
<use href="#metro" transform="translate(265,1.5)"/>
<text class="vl" x="290" y="123">VPC 10.7.0.0/16</text>
<use href="#waf" x="373.5" y="128.5" width="11" height="11"/>

<rect class="acc" x="536.5" y="39.7" width="229" height="443.3"/>
<use href="#acci" x="536.5" y="39.7" width="6.2" height="5"/>
<text class="h" x="543.5" y="43.3">Apollo Production</text>
<use href="#apollo"/>
<text class="vl" x="558.5" y="61.8">VPC 10.3.0.0/16</text>

<rect class="acc" x="807.5" y="41.7" width="229" height="443.3"/>
<use href="#acci" x="807.5" y="41.7" width="6.2" height="5"/>
<text class="h" x="814.5" y="45.3">Apollo Non Production</text>
<use href="#apollo" transform="translate(271,2)"/>
<text class="vl" x="829.5" y="63.8">VPC 10.2.0.0/16</text>

<rect class="acc" x="1071.5" y="95.5" width="229" height="387.5"/>
<use href="#acci" x="1071.5" y="95.5" width="6.2" height="5"/>
<text class="h" x="1078.5" y="99">WAY4 Production Env</text>
<use href="#mp"/>
<text class="vl" x="1093.5" y="124">VPC 10.6.0.0/16</text>
<use href="#waf" x="1179.5" y="116" width="11" height="11"/>

<rect class="acc" x="1338.5" y="93.5" width="229" height="389.5"/>
<use href="#acci" x="1338.5" y="93.5" width="6.2" height="5"/>
<text class="h" x="1345.5" y="97">WAY4 non-prod Env</text>
<use href="#mp" transform="translate(267,2)"/>
<text class="vl" x="1360.5" y="126">VPC 10.5.0.0/16</text>

<rect class="acc" x="8" y="527.5" width="230" height="358"/>
<use href="#acci" x="8" y="527.5" width="6.2" height="5"/>
<text class="h" x="14.5" y="531.2">Security Audit</text>
<use href="#sa"/>
<text class="vl" x="29" y="553.7">VPC 10.18.0.0/16</text>

<rect class="acc" x="1010" y="544" width="230" height="358"/>
<use href="#acci" x="1010" y="544" width="6.2" height="5"/>
<text class="h" x="1016.5" y="547.7">Log Archive</text>
<use href="#sa" transform="translate(1002,16.5)"/>
<text class="vl" x="1031" y="570.2">VPC 10.19.0.0/16</text>

<rect class="acc" x="268" y="532" width="230" height="353"/>
<use href="#acci" x="268" y="532" width="6.2" height="5"/>
<text class="h" x="274.5" y="535.6">Shared Services</text>
<rect class="reg" x="277" y="540.7" width="214" height="336.3"/>
<rect x="277" y="540.7" width="5" height="5" fill="#d9b45a"/>
<text class="rl" x="283.5" y="544.6">Region Singapore</text>
<rect x="283.5" y="548" width="200" height="327" fill="none" stroke="#9fd07a" stroke-width=".45"/>
<rect x="283.5" y="548" width="5" height="5" fill="#8cc665"/>
<text class="vl" x="290" y="551.6">VPC 10.17.0.0/16</text>
<path class="az" d="M304 561.5H343.5M304 760.5H343.5"/>
<rect class="az" x="367" y="560.8" width="40.7" height="201"/><rect class="az" x="429.5" y="561.5" width="40.8" height="201"/>
<text class="al" x="324.2" y="564.4">Availability Zone A</text><text class="al" x="387" y="563.8">Availability Zone B</text><text class="al" x="449.7" y="564.4">Availability Zone C</text>
<rect class="g" x="301.7" y="566.8" width="170.1" height="36.8" rx="3"/>
<rect class="sb" x="304" y="572" width="39.5" height="30.4"/><use href="#lkb" x="304" y="572.5" width="4.5" height="4.5"/><text class="lb" x="309.5" y="573.9">TGW</text><text class="lb" x="309.5" y="577.2">Attachment subnets</text>
<rect class="sb" x="367" y="572" width="40.6" height="30.4"/><use href="#lkb" x="367" y="572.5" width="4.5" height="4.5"/><text class="lb" x="373" y="573.5">TGW</text><text class="lb" x="373" y="576.8">Attachment subnets</text>
<rect class="sb" x="429.5" y="572" width="40.5" height="30.4"/><use href="#lkb" x="429.5" y="574" width="4.5" height="4.5"/><text class="lb" x="435.5" y="575">TGW</text><text class="lb" x="435.5" y="578.3">Attachment subnets</text>
<use href="#tga" x="316.6" y="580.6" width="12" height="12"/><use href="#tga" x="381.4" y="580.6" width="12" height="12"/><use href="#tga" x="443.7" y="581.8" width="12" height="12"/>
<text class="il" x="322.6" y="595.8">Transit Gateway</text><text class="il" x="322.6" y="599.1">Attachment</text>
<text class="il" x="387.4" y="594.8">Transit Gateway</text><text class="il" x="387.4" y="598.1">Attachment</text>
<text class="il" x="449.7" y="596.8">Transit Gateway</text><text class="il" x="449.7" y="600.1">Attachment</text>
<rect class="g" x="301.7" y="614" width="170.1" height="39" rx="3"/>
<rect class="sb" x="304" y="621.7" width="40.8" height="30.3"/><use href="#lkb" x="304" y="622.5" width="4.5" height="4.5"/><text class="lb" x="309.5" y="623">ECS control plane</text><text class="lb" x="309.5" y="626.3">subnets</text>
<rect class="sb" x="367" y="621.7" width="40.6" height="30.3"/><use href="#lkb" x="367" y="622.5" width="4.5" height="4.5"/><text class="lb" x="372.5" y="623">ECS control plane</text><text class="lb" x="372.5" y="626.3">subnets</text>
<rect class="sb" x="429.5" y="621.7" width="40.5" height="30.3"/><use href="#lkb" x="429.5" y="622.5" width="4.5" height="4.5"/><text class="lb" x="435" y="623">ECS control plane</text><text class="lb" x="435" y="626.3">subnets</text>
<use href="#eks" x="314.3" y="629.4" width="12.5" height="12.1"/><use href="#eks" x="377.8" y="629.8" width="12.5" height="12.1"/><use href="#eks" x="441.7" y="629.4" width="12.2" height="12.1"/>
<text class="il" x="320.5" y="645.6">ECS Control Plane</text><text class="il" x="384" y="645.4">ECS Control Plane</text><text class="il" x="447.8" y="645.6">ECS Control Plane</text>
<rect class="g" x="301.7" y="663" width="170.1" height="39" rx="3"/>
<rect class="sb" x="304" y="671.2" width="39.5" height="30.3"/><use href="#lkb" x="304" y="672" width="4.5" height="4.5"/><text class="lb" x="309.5" y="673.6">Private Subnets</text>
<rect class="sb" x="367" y="671.2" width="40.6" height="30.3"/><use href="#lkb" x="367" y="672" width="4.5" height="4.5"/><text class="lb" x="372.5" y="673.6">Private Subnets</text>
<rect class="sb" x="429.5" y="669" width="40.5" height="32.5"/><use href="#lkb" x="429.5" y="670" width="4.5" height="4.5"/><text class="lb" x="435" y="671.3">Private Subnets</text>
<use href="#ec2" x="318" y="679.7" width="12.5" height="12.1"/><use href="#ec2" x="379.7" y="679.7" width="12.5" height="12.1"/><use href="#ec2" x="440.7" y="678.5" width="12.5" height="12.1"/>
<text class="il" x="324.2" y="694.8">EC2</text><text class="il" x="386" y="694.8">EC2</text><text class="il" x="447" y="693.7">EC2</text>
<rect class="g" x="301.7" y="714.7" width="170.1" height="39" rx="3"/>
<rect class="sg" x="304" y="722" width="39.5" height="29"/><use href="#lkg" x="304" y="722.3" width="4.5" height="4.5"/><text class="lg" x="309.5" y="724.4">Public Subnet</text>
<rect class="sg" x="367" y="720.5" width="40.6" height="30.5"/><use href="#lkg" x="367" y="720.8" width="4.5" height="4.5"/><text class="lg" x="372.5" y="722.9">Public Subnet</text>
<rect class="sg" x="429.5" y="721.6" width="40.5" height="29.4"/><use href="#lkg" x="429.5" y="722" width="4.5" height="4.5"/><text class="lg" x="435" y="724.1">Public Subnet</text>

<rect x="542" y="564.7" width="238" height="305.3" rx="30" fill="#fff" stroke="#3f8ff5" stroke-width=".7"/>
<rect class="reg" x="550.3" y="575.6" width="217.7" height="284.4"/>
<rect x="550.3" y="575.6" width="5" height="5" fill="#d9b45a"/>
<text x="557" y="579.4" font-size="2.2px" fill="#333">Region Singapore</text>
<path d="M547 573.5a3.5 3.5 0 0 1 1-6.5 5 5 0 0 1 9 0 3.5 3.5 0 0 1 0 6.5z" fill="#f58536"/>
<text x="549.1" y="571.3" font-size="1.8px" font-weight="bold" fill="#fff">AWS</text>
<text x="577.5" y="567.8" font-size="2.1px" font-weight="bold" fill="#111" text-anchor="middle">OPENWAY Share</text>
<text x="577.5" y="571.3" font-size="2.1px" font-weight="bold" fill="#111" text-anchor="middle">Network</text>
<rect x="558.8" y="604.5" width="201.2" height="253.5" fill="none" stroke="#2e8b22" stroke-width=".5"/>
<rect x="558.8" y="604.5" width="5" height="5" fill="#2e8b22"/>
<text class="vl" x="565" y="608.2">VPC 10.16.0.0/16</text>
<rect class="az" x="575" y="610.6" width="41" height="196"/><rect class="az" x="640.7" y="610.6" width="41.1" height="196"/><rect class="az" x="706" y="610.6" width="41" height="196"/>
<text class="al" x="595.4" y="614.2">Availability Zone A</text><text class="al" x="661.2" y="614.2">Availability Zone B</text><text class="al" x="726.7" y="614.2">Availability Zone C</text>
<rect class="g" x="573" y="615.6" width="177" height="38.7" rx="3"/>
<rect class="sb" x="576.4" y="623" width="39.2" height="30.8"/><use href="#lkb" x="576.6" y="624.5" width="4.5" height="4.5"/><text class="lb" x="582.2" y="624.3">TGW</text><text class="lb" x="582.2" y="628.1">Attachment subnets</text>
<rect class="sb" x="643.3" y="623" width="39.2" height="30.8"/><use href="#lkb" x="643.6" y="624" width="4.5" height="4.5"/><text class="lb" x="649.4" y="622.2">TGW</text><text class="lb" x="649.4" y="626.1">Attachment subnets</text>
<rect class="sb" x="707.7" y="623" width="39.3" height="30.8"/><use href="#lkb" x="707.9" y="624.5" width="4.5" height="4.5"/><text class="lb" x="713.8" y="621.7">TGW</text><text class="lb" x="713.8" y="625.6">Attachment subnets</text>
<use href="#tga" x="589.6" y="632.2" width="12" height="12"/><use href="#tga" x="654.3" y="632.2" width="12" height="12"/><use href="#tga" x="721" y="633.6" width="12" height="12"/>
<text class="il" x="595.6" y="647">Transit Gateway</text><text class="il" x="595.6" y="650.5">Attachment</text>
<text class="il" x="662" y="648.3">Transit Gateway</text><text class="il" x="662" y="651.8">Attachment</text>
<text class="il" x="726.6" y="648.3">Transit Gateway</text><text class="il" x="726.6" y="651.8">Attachment</text>
<rect class="g" x="573" y="664" width="177" height="39" rx="3"/>
<rect class="sg" x="577" y="672" width="37.2" height="29"/><use href="#lkg" x="577.5" y="672.5" width="4.5" height="4.5"/><text class="lg" x="584" y="674.4">NAT Gateway subnets</text>
<rect class="sg" x="643.3" y="672" width="36.6" height="29"/><use href="#lkg" x="643.6" y="672.5" width="4.5" height="4.5"/><text class="lg" x="648.8" y="674.4">NAT Gateway subnets</text>
<rect class="sg" x="708.9" y="672" width="38.3" height="29"/><use href="#lkg" x="709.2" y="672.5" width="4.5" height="4.5"/><text class="lg" x="715" y="674.2">NAT Gateway subnets</text>
<use href="#nat" x="585.8" y="680.8" width="12" height="12"/><use href="#nat" x="650.4" y="681" width="12" height="12"/><use href="#nat" x="718.7" y="680.8" width="12" height="12"/>
<text class="il" x="592" y="695.8">NAT Gateway</text><text class="il" x="656.5" y="694.6">NAT</text><text class="il" x="656.5" y="698">Gateway</text><text class="il" x="725.3" y="695.8">NAT Gateway</text>
<rect class="g" x="573" y="713" width="177" height="39" rx="3"/>
<rect class="sb" x="576.5" y="720.4" width="37.2" height="29.6"/><use href="#lkb" x="576.7" y="722.5" width="4.5" height="4.5"/><text class="lb" x="582.6" y="721.9">VPC Endpoint subnets</text>
<rect class="sb" x="643.3" y="720.4" width="36.6" height="29.6"/><use href="#lkb" x="643.3" y="723" width="4.5" height="4.5"/><text class="lb" x="649.4" y="722.4">VPC Endpoint subnets</text>
<rect class="sb" x="708.9" y="720.4" width="37" height="29.6"/><use href="#lkb" x="709.2" y="723" width="4.5" height="4.5"/><text class="lb" x="715.2" y="722.4">VPC Endpoint subnets</text>
<rect class="g" x="573" y="762.6" width="177" height="40.5" rx="3"/>
<rect class="sb" x="576.5" y="770.8" width="37.2" height="30"/><use href="#lkb" x="576.7" y="772" width="4.5" height="4.5"/><text class="lb" x="582.7" y="772.2">Route53 Resolver</text><text class="lb" x="582.7" y="775.6">Endpoint subnets</text>
<rect class="sb" x="643.3" y="770.8" width="36.6" height="30"/><use href="#lkb" x="643.3" y="772" width="4.5" height="4.5"/><text class="lb" x="649.4" y="772.2">Route53 Resolver</text><text class="lb" x="649.4" y="775.6">Endpoint subnets</text>
<rect class="sb" x="708.9" y="770.8" width="37" height="30"/><use href="#lkb" x="709.2" y="772.5" width="4.5" height="4.5"/><text class="lb" x="715.3" y="772.8">Route53 Resolver</text><text class="lb" x="715.3" y="776.2">Endpoint subnets</text>
<use href="#tga" x="590" y="777" width="11" height="11"/><use href="#tga" x="655" y="777" width="11" height="11"/>
<path class="k" d="M601 779.4H627V828.6M654 779.4H631V828.6M596 788V800H620V828.6M660 788V800H636V828.6M623.5 800V828.6M633.5 800V828.6" stroke-width=".4" marker-end="url(#ar)"/>
<rect x="620" y="829" width="16" height="16" fill="url(#pg)"/>
<g fill="none" stroke="#fff" stroke-width=".5"><circle cx="628" cy="837" r="4.5"/><rect x="625.5" y="835.5" width="5" height="3.5"/></g>
<text class="il" x="628" y="848.5">Route 53 Resolver</text>
<path class="k" d="M595.6 654.5V663.3M660.3 654.5V663.3M727 654.5V663.3" stroke-width=".4" marker-end="url(#ar)"/>
<path class="pt" d="M573 628H552.5V735H573M750 628H766V735.5H750.5" marker-end="url(#ap)"/>
<rect x="649" y="576" width="22.5" height="22.5" fill="url(#pg)" stroke="#4d27aa" stroke-width=".3"/>
<g fill="none" stroke="#fff" stroke-width=".6"><circle cx="660.2" cy="587.2" r="8"/><circle cx="660.2" cy="587.2" r="2.2"/><circle cx="660.2" cy="580.8" r="1.3"/><circle cx="660.2" cy="593.6" r="1.3"/><circle cx="653.8" cy="587.2" r="1.3"/><circle cx="666.6" cy="587.2" r="1.3"/><path d="M660.2 582.1V585M660.2 589.4V592.3M655.1 587.2H658M662.4 587.2H665.3"/></g>
<text class="il" x="658" y="601.5" style="font-size:2.1px">Transit Gateway</text>

<path class="gr" d="M62.5 468V507.6H513V587.2H648.6" marker-end="url(#ag)"/>
<path class="gr" d="M322 473V507.6M133.2 507.6V568.5"/>
<path class="pu" d="M59.5 468V498H521V580.4H648.6" marker-end="url(#ap)"/>
<path class="pu" d="M318 473V498M126.2 498V568.5"/>
<path class="gr" d="M472 587.2H513"/>
<path class="pu" d="M472 590.5H648.6" marker-end="url(#ap)"/>
<path class="gr" d="M651.9 473V575.6" marker-end="url(#ag)"/>
<path class="pu" d="M657.9 473V575.6" marker-end="url(#ap)"/>
<path class="gr" d="M918 470V498.4M1445 302V498.4H663V575.6" marker-end="url(#ag)"/>
<path class="pu" d="M923 470V505.4M1441 302V505.4H670V575.6" marker-end="url(#ap)"/>
<path class="pt" d="M1189 298V505.4"/>
<path class="gr" d="M1066 498.4V585"/>
<path class="pu" d="M1070 505.4V585"/>
<path class="gr" d="M671.5 594H727V632M649 594H595.6V632M660.3 598.5V632" stroke-width=".35" marker-end="url(#ag)"/>
<path class="pu" d="M844 581.7H671.9" marker-end="url(#ap)"/>
<path class="pu" d="M869 589.4H671.9" marker-end="url(#ap)"/>
<path class="pu" d="M844 581.7V557.1H868.5M844 581.7V760H855.8" marker-end="url(#ap)"/>
<path class="pu" d="M795 589.4V689.5H853.5M784.7 589.4V781H855.8" marker-end="url(#ap)"/>

<use href="#vpn" x="719.5" y="577.7" width="8.2" height="8"/>
<text class="il" x="724.5" y="587.6">VPN over internet</text>
<use href="#vpn" x="744.2" y="585.7" width="8.2" height="8"/>
<text class="il" x="747.7" y="596.1">Direct Connect</text>
<use href="#vpn" x="796.9" y="585.9" width="8.2" height="8.2"/>
<text class="il" x="801.2" y="597.2">VPN over DX</text>
<use href="#vpn" x="791.2" y="667.7" width="8.3" height="8.2"/>
<text class="il" x="797.3" y="678.3">VPN site to site</text>
<use href="#vpn" x="780.6" y="700.9" width="8.3" height="8.3"/>
<text class="il" x="794.5" y="712">VPN site to site</text>

<path d="M698 522H722M728.5 522H757" stroke="#000" stroke-width=".5"/>
<text x="725.2" y="522.7" font-size="2px" fill="#3a9cf5" text-anchor="middle">All Traffic</text>
<path d="M698 532.6H722M731 532.6H757" stroke="#1dc41d" stroke-width=".5"/>
<text x="726.5" y="529.4" font-size="2px" fill="#3a9cf5" text-anchor="middle">Internet</text>
<text x="726.5" y="533.1" font-size="2px" fill="#3a9cf5" text-anchor="middle">outbound</text>
<text x="726.5" y="536.4" font-size="2px" fill="#3a9cf5" text-anchor="middle">traffic</text>
<path d="M698 547H722M731 547H757" stroke="#6b6bf2" stroke-width=".5"/>
<text x="726.9" y="545.6" font-size="2px" fill="#3a9cf5" text-anchor="middle">VPN</text>
<text x="726.9" y="549.2" font-size="2px" fill="#3a9cf5" text-anchor="middle">Traffic</text>

<rect x="850" y="540.7" width="93" height="96.8" fill="#fff" stroke="#5a6b86" stroke-width=".25"/>
<rect x="848" y="540.7" width="4.5" height="4.5" fill="#5a6b86"/>
<text x="856.9" y="544.4" font-size="2.1px" fill="#5a6b86">Corporate data center</text>
<use href="#cg" x="869" y="551" width="12.2" height="12.2"/><use href="#cg" x="869" y="585.3" width="12.2" height="12.2"/>
<text class="il" x="873" y="566.8">Customer</text><text class="il" x="873" y="570.3">Gateway</text>
<text class="il" x="875" y="600.9">Customer</text><text class="il" x="875" y="604.4">Gateway</text>
<use href="#srv" x="897.7" y="553.4" width="9.1" height="15.5"/><use href="#srv" x="924.4" y="553.4" width="9.1" height="15.5"/><use href="#srv" x="908" y="588.4" width="9" height="15.4"/>

<rect x="849" y="656" width="139" height="82" fill="#fff" stroke="#111" stroke-width=".25"/>
<rect x="848.7" y="656" width="5" height="5" fill="#111"/>
<text x="855.5" y="659.4" font-size="2.1px" fill="#111">Other Cloud</text>
<ellipse cx="862.6" cy="687.5" rx="8" ry="3.4" fill="#2a7fd0"/><ellipse cx="862.6" cy="685.5" rx="8" ry="3.2" fill="#6ab8f0"/>
<path d="M858 685.5h9M862.6 683.5v4" stroke="#fff" stroke-width=".5"/>
<text class="il" x="862.6" y="698.6">Edge Router</text>
<path class="k" d="M870.6 687H887.5M910 687H952.6" marker-end="url(#ar)"/>
<path d="M893 694a4 4 0 0 1-2-7 5 5 0 0 1 7-6 6 6 0 0 1 10-1 5 5 0 0 1 8 3 4 4 0 0 1 4 6 4 4 0 0 1-6 5 6 6 0 0 1-11 1 5 5 0 0 1-10-1z" fill="#fff" stroke="#111" stroke-width=".25"/>
<text class="il" x="905.5" y="688">Private Network</text>
<path d="M953 690l15-5 16 4v7l-15 5-16-4z" fill="#3a4250"/>
<path d="M953 685l15-5 16 4v5l-15 5-16-4z" fill="#f08a24"/>
<rect x="956" y="676" width="6" height="6" fill="#2a67b8"/><rect x="963" y="675" width="6" height="6" fill="#2a67b8"/><rect x="970" y="676" width="6" height="6" fill="#2a67b8"/><rect x="977" y="677" width="6" height="6" fill="#2a67b8"/><rect x="960" y="679" width="6" height="6" fill="#3a7fd0"/><rect x="968" y="679" width="6" height="6" fill="#3a7fd0"/>
<text x="962" y="689" font-size="2.2px" font-weight="bold" fill="#fff">VMware</text>

<rect x="848" y="742" width="140" height="58" fill="#fff" stroke="#5a6b86" stroke-width=".25"/>
<rect x="848" y="742" width="4.5" height="4.5" fill="#5a6b86"/>
<text x="854.9" y="745.6" font-size="2.1px" fill="#5a6b86">OPW data center</text>
<use href="#cg" x="856.3" y="753.9" width="12.2" height="12.2"/><use href="#cg" x="856.3" y="774.9" width="12.2" height="12.2"/>
<text class="il" x="862.4" y="766.8">Customer</text><text class="il" x="862.4" y="770.3">Gateway</text>
<text class="il" x="862.4" y="788">Customer</text><text class="il" x="862.4" y="791.5">Gateway</text>
<use href="#srv" x="895.6" y="758.3" width="9" height="15.7"/><use href="#srv" x="924.4" y="758.3" width="9.1" height="15.7"/><use href="#srv" x="952.6" y="758.3" width="9" height="15.7"/>
<text class="il" x="898.8" y="777.6">HSM</text><text class="il" x="928.6" y="776.4">SMS</text><text class="il" x="928.6" y="779.9">Gateway</text><text class="il" x="957" y="777.6">On-premise Server</text>
</svg>
</body></html>
